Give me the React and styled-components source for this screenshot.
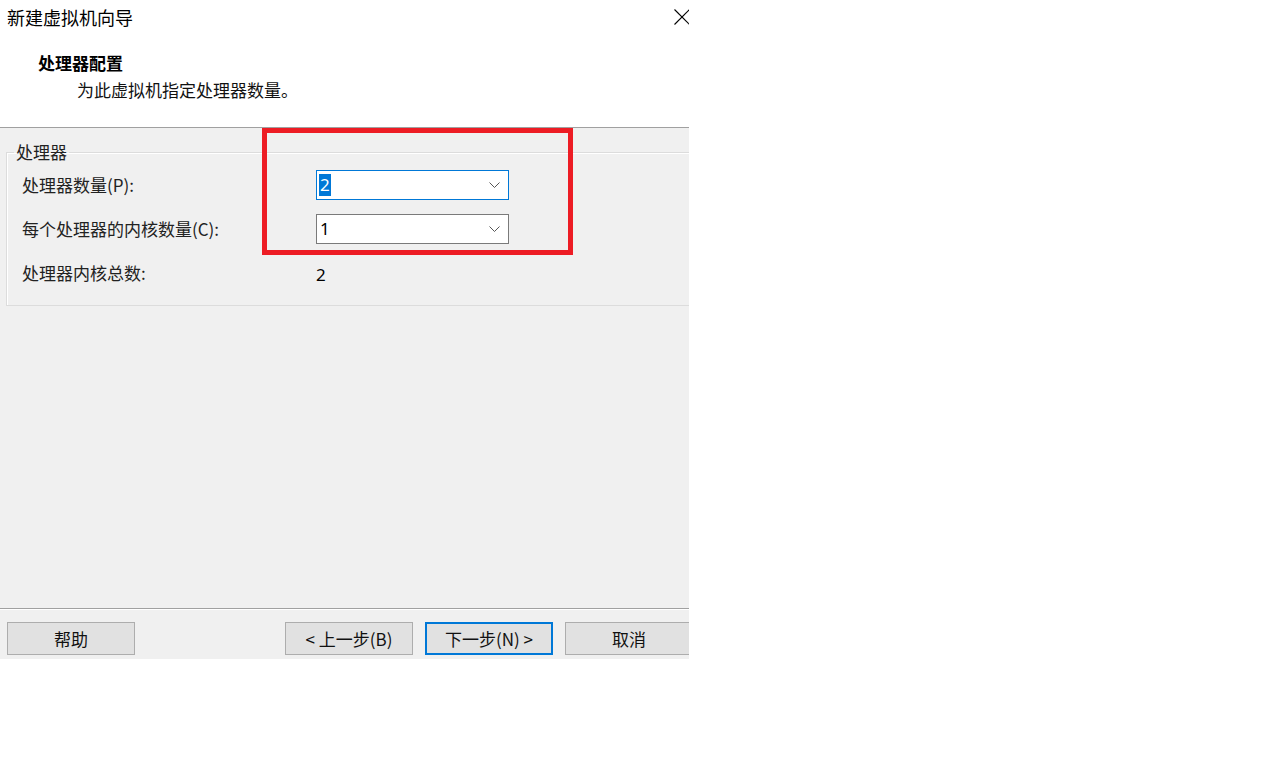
import React from 'react'
import styled, { createGlobalStyle } from 'styled-components'

const GlobalStyle = createGlobalStyle`
  html, body {
    margin: 0;
    padding: 0;
    background: #ffffff;
  }
  body {
    font-family: "Noto Sans CJK SC", "Microsoft YaHei", sans-serif;
    color: #000000;
  }
`

const Dialog = styled.div`
  position: relative;
  width: 689px;
  height: 659px;
  overflow: hidden;
  display: flex;
  flex-direction: column;
  background: #f0f0f0;
`

const Header = styled.div`
  height: 127px;
  flex: none;
  background: #ffffff;
  border-bottom: 1px solid #a0a0a0;
  display: flex;
  flex-direction: column;
`

const TitleBar = styled.div`
  height: 34px;
  display: flex;
  align-items: center;
  justify-content: space-between;
  padding-left: 7px;
`

const TitleText = styled.span`
  font-size: 18px;
  line-height: 24px;
`

const CloseButton = styled.div`
  width: 46px;
  height: 34px;
  display: flex;
  align-items: center;
  justify-content: center;
  margin-right: -16px;
`

const PageTitle = styled.div`
  margin-top: 17px;
  padding-left: 38px;
  font-size: 17px;
  font-weight: bold;
  line-height: 24px;
`

const PageSubtitle = styled.div`
  margin-top: 3px;
  padding-left: 77px;
  font-size: 17px;
  line-height: 24px;
  color: #111;
`

const Body = styled.div`
  flex: 1;
  padding: 14px 0 0 6px;
`

const Group = styled.fieldset`
  margin: 0;
  width: 720px;
  padding: 8px 0 17px 15px;
  border: 1px solid #dcdcdc;
  box-shadow: inset 1px 1px 0 #ffffff;
`

const Legend = styled.legend`
  margin-left: -8px;
  padding: 0 2px;
  font-size: 17px;
  line-height: 20px;
  color: #222;
`

const FieldGrid = styled.div`
  display: grid;
  grid-template-columns: 294px 193px;
  grid-auto-rows: 30px;
  row-gap: 14px;
  align-items: center;
`

const Label = styled.span`
  font-size: 17px;
  line-height: 24px;
  color: #222;
`

const Value = styled.span`
  font-family: "Segoe UI", "Noto Sans", sans-serif;
  font-size: 17px;
  padding-top: 2px;
`

const Combo = styled.div`
  box-sizing: border-box;
  height: 30px;
  background: #ffffff;
  border: 1px solid ${p => (p.$focused ? '#0078d7' : '#7a7a7a')};
  display: flex;
  align-items: center;
  justify-content: space-between;
  padding: 0 8px 0 2px;
`

const ComboValue = styled.span`
  font-family: "Segoe UI", "Noto Sans", sans-serif;
  font-size: 17px;
  line-height: 22px;
  padding: 0 1px;
  background: ${p => (p.$selected ? '#0078d7' : 'transparent')};
  color: ${p => (p.$selected ? '#ffffff' : '#000000')};
`

const Footer = styled.div`
  box-sizing: border-box;
  flex: none;
  height: 51px;
  border-top: 1px solid #a0a0a0;
  box-shadow: inset 0 1px 0 #ffffff;
  display: flex;
  align-items: flex-start;
  padding: 13px 0 0 7px;
  gap: 12px;
`

const Button = styled.div`
  box-sizing: border-box;
  flex: none;
  width: 128px;
  height: 33px;
  background: #e1e1e1;
  border: ${p => (p.$default ? '2px solid #0078d7' : '1px solid #adadad')};
  display: flex;
  align-items: center;
  justify-content: center;
  font-size: 17px;
  color: #111;
  margin-right: ${p => p.$gapAfter || 0}px;
`

const Highlight = styled.div`
  position: absolute;
  left: 262px;
  top: 128px;
  width: 311px;
  height: 127px;
  box-sizing: border-box;
  border: 5px solid #ed1c24;
  pointer-events: none;
`

function Chevron() {
  return (
    <svg width="11" height="7" viewBox="0 0 11 7">
      <polyline points="0.5,0.5 5.5,5.5 10.5,0.5" fill="none" stroke="#555" strokeWidth="1" />
    </svg>
  )
}

function CloseIcon() {
  return (
    <svg width="16" height="16" viewBox="0 0 16 16">
      <line x1="0.5" y1="0.5" x2="15.5" y2="15.5" stroke="#000" strokeWidth="1.1" />
      <line x1="15.5" y1="0.5" x2="0.5" y2="15.5" stroke="#000" strokeWidth="1.1" />
    </svg>
  )
}

export default function App() {
  return (
    <>
      <GlobalStyle />
      <Dialog>
        <Header>
          <TitleBar>
            <TitleText>新建虚拟机向导</TitleText>
            <CloseButton>
              <CloseIcon />
            </CloseButton>
          </TitleBar>
          <PageTitle>处理器配置</PageTitle>
          <PageSubtitle>为此虚拟机指定处理器数量。</PageSubtitle>
        </Header>
        <Body>
          <Group>
            <Legend>处理器</Legend>
            <FieldGrid>
              <Label>处理器数量(P):</Label>
              <Combo $focused>
                <ComboValue $selected>2</ComboValue>
                <Chevron />
              </Combo>
              <Label>每个处理器的内核数量(C):</Label>
              <Combo>
                <ComboValue>1</ComboValue>
                <Chevron />
              </Combo>
              <Label>处理器内核总数:</Label>
              <Value>2</Value>
            </FieldGrid>
          </Group>
        </Body>
        <Footer>
          <Button $gapAfter={138}>帮助</Button>
          <Button>&lt; 上一步(B)</Button>
          <Button $default>下一步(N) &gt;</Button>
          <Button>取消</Button>
        </Footer>
        <Highlight />
      </Dialog>
    </>
  )
}
